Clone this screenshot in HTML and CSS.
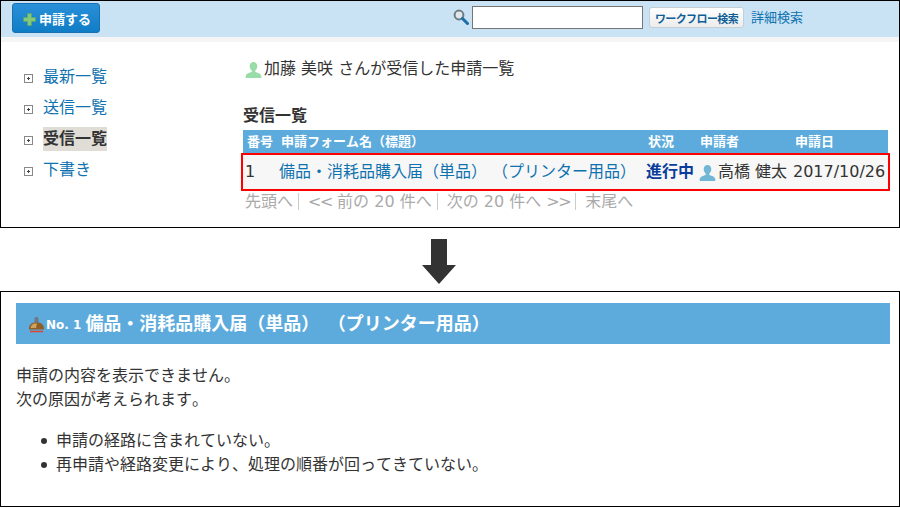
FILE: index.html
```html
<!DOCTYPE html>
<html lang="ja">
<head>
<meta charset="utf-8">
<title>ワークフロー</title>
<link rel="stylesheet" href="styles.css">
</head>
<body>
<section class="panel top">
  <header class="bar">
    <button class="apply"><svg class="plus" width="13" height="13" viewBox="0 0 13 13"><path d="M4.500 0.500h4v4h4v4h-4v4h-4v-4h-4v-4h4z" fill="#82c97a" stroke="#5fa856" stroke-width=".6"/></svg>申請する</button>
    <div class="search">
      <svg class="glass" width="16" height="17" viewBox="0 0 16 17"><circle cx="6" cy="6" r="4.400" fill="#dfe7ec" stroke="#6f7b84" stroke-width="2"/><path d="M9.500 9.500l5 5" stroke="#1c6ea8" stroke-width="3" stroke-linecap="round"/></svg>
      <input class="field" type="text" aria-label="検索">
      <button class="find">ワークフロー検索</button>
      <a class="link detail">詳細検索</a>
    </div>
  </header>
  <div class="strip"></div>
  <div class="columns">
    <nav class="menu">
      <div class="item"><i class="box"></i><a class="link">最新一覧</a></div>
      <div class="item"><i class="box"></i><a class="link">送信一覧</a></div>
      <div class="item"><i class="box"></i><b class="current">受信一覧</b></div>
      <div class="item"><i class="box"></i><a class="link">下書き</a></div>
    </nav>
    <main class="content">
      <h1 class="title"><svg class="user" width="17" height="18" viewBox="0 0 17 18"><path d="M8.500 1c2.400 0 3.800 1.900 3.800 4.300 0 2-1 3.500-2 4.300v1.400c2.500.8 6 1.700 6 4.500V17H.7v-1.500c0-2.800 3.500-3.700 6-4.500V9.600c-1-.8-2-2.300-2-4.300C4.700 2.900 6.100 1 8.500 1z" fill="#98dca8"/></svg>加藤 美咲 さんが受信した申請一覧</h1>
      <h2 class="sub">受信一覧</h2>
      <div class="grid head"><span>番号</span><span>申請フォーム名（標題）</span><span>状況</span><span>申請者</span><span>申請日</span></div>
      <div class="grid row"><span>1</span><a class="link">備品・消耗品購入届（単品） （プリンター用品）</a><b class="state">進行中</b><span class="person"><svg class="user" width="17" height="18" viewBox="0 0 17 18"><path d="M8.500 1c2.400 0 3.800 1.900 3.800 4.300 0 2-1 3.500-2 4.300v1.400c2.500.8 6 1.700 6 4.500V17H.7v-1.500c0-2.800 3.500-3.700 6-4.500V9.600c-1-.8-2-2.300-2-4.300C4.700 2.900 6.100 1 8.500 1z" fill="#72b6d6"/></svg>高橋 健太</span><span>2017/10/26</span></div>
      <p class="pager">先頭へ<s></s><span class="arr">&lt;&lt;</span> 前の 20 件へ<s></s>次の 20 件へ <span class="arr">&gt;&gt;</span><s></s>末尾へ</p>
    </main>
  </div>
</section>
<div class="arrow"><svg width="34" height="45" viewBox="0 0 34 45"><path d="M9 0h16v26h9L17 45 0 26h9z" fill="#333"/></svg></div>
<section class="panel bottom">
  <div class="banner"><svg class="stamp" width="17" height="16" viewBox="0 0 17 16"><rect x="6.500" y="0" width="4" height="6" rx="1.500" fill="#6b7a86"/><path d="M6 5.500h5c2.500.6 5 2.600 5 5.500v1.500H1V11c0-2.900 2.500-4.900 5-5.500z" fill="#8f5f26"/><path d="M6 6.500h3L8 11H2.500C3 9 4 7.300 6 6.500z" fill="#cfa25f"/><path d="M2 14.500h13" stroke="#d8452c" stroke-width="1.500"/></svg><span class="no">No. 1</span><span class="name">備品・消耗品購入届（単品） （プリンター用品）</span></div>
  <p class="msg">申請の内容を表示できません。<br>次の原因が考えられます。</p>
  <ul class="causes">
    <li>申請の経路に含まれていない。</li>
    <li>再申請や経路変更により、処理の順番が回ってきていない。</li>
  </ul>
</section>
</body>
</html>
```
FILE: styles.css
```css
* { box-sizing: border-box; }
html, body { margin: 0; padding: 0; }
body {
  width: 900px; height: 508px; overflow: hidden; background: #fff; color: #333;
  font: 16px/24px "DejaVu Sans", "Noto Sans CJK JP", sans-serif;
  font-kerning: none; text-spacing-trim: space-all;
}
.panel { border: 1px solid #000; }
.top { height: 228px; }
.bar { height: 36px; background: #c9e3f5; display: flex; align-items: center; padding: 0 0 0 11px; }
.strip { height: 5px; background: #f5f5f5; }
.apply {
  width: 88px; height: 30px; margin-bottom: 2px; padding: 0 0 0 2px; display: flex; align-items: center; justify-content: center; gap: 3px;
  border: 1px solid #1a6fb0; border-radius: 3px; background: linear-gradient(#2a90d8, #0f7dc6); color: #fff;
  font: bold 13px "DejaVu Sans", "Noto Sans CJK JP", sans-serif;
}
.plus { margin-top: 3px; }
.search { display: flex; align-items: center; margin-left: 353px; margin-bottom: 3px; }
.glass { margin-right: 3px; }
.field { width: 171px; height: 23px; border: 1px solid #767676; background: #fff; padding: 0; }
.find {
  width: 95px; height: 21px; margin-left: 6px; padding: 0; border: 1px solid #c4cfd6; border-radius: 3px; white-space: nowrap;
  background: linear-gradient(#fff, #ececec); color: #0f5f96; font: bold 11px "DejaVu Sans", "Noto Sans CJK JP", sans-serif; letter-spacing: -.6px;
}
.detail { margin-left: 7px; font-size: 13px; }
.link { color: #0f72b0; }
.columns { display: flex; }
.menu { width: 242px; padding: 19px 0 0 23px; }
.item { display: flex; align-items: center; height: 31px; }
.box { width: 9px; height: 9px; margin-right: 10px; margin-top: 3px; border: 1px solid #888; background: radial-gradient(circle, #444 0, #444 1px, transparent 1.2px); }
.current { background: #e0ddd6; color: #333; line-height: 24px; }
.content { width: 645px; padding-top: 15px; }
.title { margin: 0 0 0 2px; font-size: 16px; font-weight: normal; height: 24px; display: flex; align-items: center; }
.title .user { margin-right: 2px; margin-top: 2px; }
.sub { margin: 25px 0 0; font-size: 16px; line-height: 20px; font-weight: bold; }
.grid { display: grid; align-items: center; white-space: nowrap; }
.head { grid-template-columns: 34px 367px 52px 95px 1fr; height: 23px; margin-top: 4px; background: #5dabdc; color: #fff; font-size: 13px; font-weight: bold; padding-left: 4px; }
.row { grid-template-columns: 34px 367px 53px 94px 1fr; height: 38px; margin: 0 -2px; border: 2px solid #f00; background: #f7f7f7; padding-left: 2px; }
.state { color: #0a3c9c; }
.person { display: flex; align-items: center; }
.person .user { margin-right: 2px; margin-top: 2px; }
.pager { margin: 0 0 0 2px; color: #aaa; line-height: 22px; white-space: pre; }
.arr { letter-spacing: -1.400px; }
.pager s { display: inline-block; width: 1px; height: 17px; margin: 0 9px 0 5px; background: #ccc; vertical-align: -3px; }
.arrow { height: 63px; padding: 11px 0 0 422px; }
.arrow svg { display: block; }
.bottom { height: 216px; padding: 11px 9px 0 15px; }
.banner { height: 41px; background: #5dabdc; color: #fff; display: flex; align-items: center; padding-left: 12px; font-weight: bold; }
.stamp { margin-top: 3px; margin-right: 1px; }
.no { font-size: 12px; margin-top: 3px; margin-right: 4px; }
.name { font-size: 18px; word-spacing: 2px; }
.msg { margin: 20px 0 0; line-height: 24px; }
.causes { margin: 17px 0 0; padding-left: 40px; line-height: 24px; list-style: none; }
.causes li::before { content: ""; display: inline-block; width: 6px; height: 6px; border-radius: 50%; background: #333; margin-left: -15px; margin-right: 9px; vertical-align: 2px; }
```
